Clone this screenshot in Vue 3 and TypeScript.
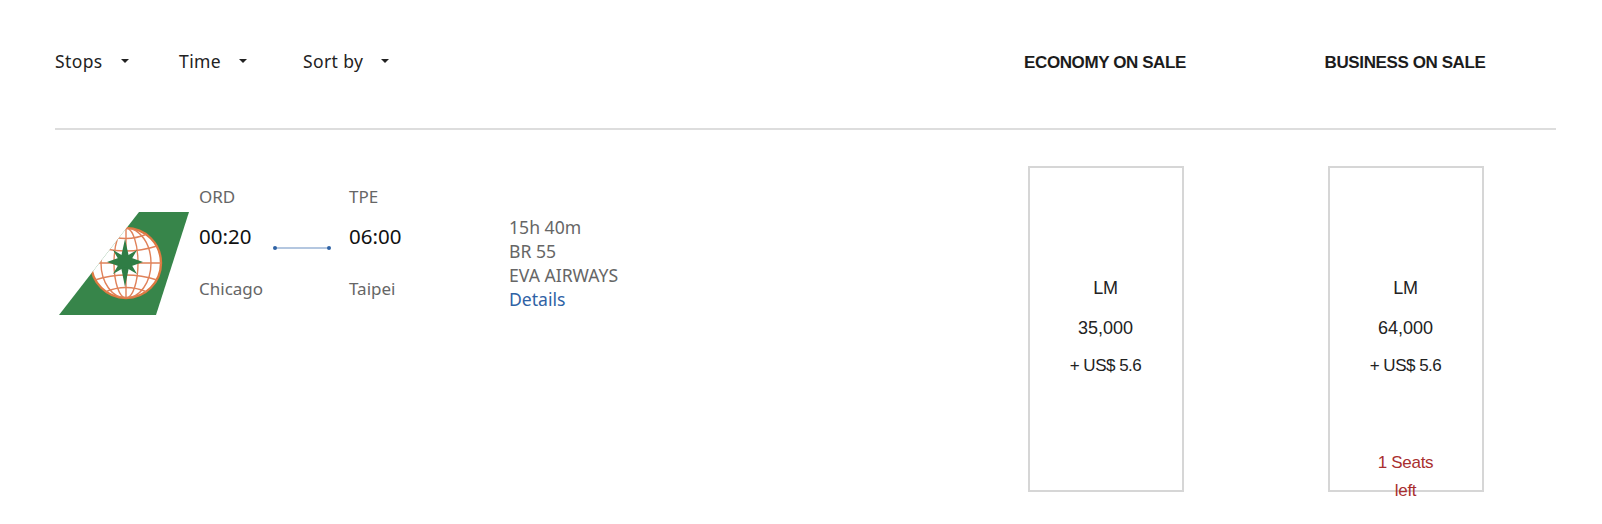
<script setup lang="ts">
interface Fare { label: string; miles: string; tax: string; seats?: string }
const filters: string[] = ['Stops', 'Time', 'Sort by']
const fares: Fare[] = [
  { label: 'LM', miles: '35,000', tax: '+ US$ 5.6' },
  { label: 'LM', miles: '64,000', tax: '+ US$ 5.6', seats: '1 Seats left' },
]
</script>

<template>
  <div class="page">
    <header class="head">
      <div class="filters">
        <div v-for="f in filters" :key="f" class="filter">
          <span>{{ f }}</span><i class="caret"></i>
        </div>
      </div>
      <div class="cabins">
        <div class="cabin"><span>ECONOMY ON SALE</span></div>
        <div class="cabin"><span>BUSINESS ON SALE</span></div>
      </div>
    </header>
    <section class="row">
      <svg class="tail" width="130" height="103" viewBox="0 0 130 103">
        <defs>
          <clipPath id="tailclip"><path d="M80 0H130L97 103H0Z" /></clipPath>
          <clipPath id="globeclip"><circle cx="67" cy="51" r="35" /></clipPath>
        </defs>
        <path d="M80 0H130L97 103H0Z" fill="#37854a" />
        <g clip-path="url(#tailclip)">
          <circle cx="67" cy="51" r="35" fill="#fff" stroke="#de7a42" stroke-width="2.400" />
          <g clip-path="url(#globeclip)" fill="none" stroke="#e0825a" stroke-width="1.400">
            <ellipse cx="67" cy="51" rx="12" ry="35" />
            <ellipse cx="67" cy="51" rx="25" ry="35" />
            <path d="M67 16V86M32 51H102" />
            <path d="M36 34Q67 44 98 34M36 68Q67 58 98 68M46 22Q67 31 88 22M46 80Q67 71 88 80" />
          </g>
        </g>
        <path d="M66 27L70 45L84 50L70 55L66 75L62 55L48 50L62 45Z" fill="#2f7d45" />
        <path d="M54 38L66 45L78 38L71 50L78 62L66 55L54 62L61 50Z" fill="#2f7d45" />
      </svg>
      <div class="route">
        <div class="stop">
          <div class="code">ORD</div>
          <div class="clock">00:20</div>
          <div class="city">Chicago</div>
        </div>
        <div class="link"><i></i></div>
        <div class="stop">
          <div class="code">TPE</div>
          <div class="clock">06:00</div>
          <div class="city">Taipei</div>
        </div>
      </div>
      <div class="info">
        <div>15h 40m</div>
        <div>BR 55</div>
        <div>EVA AIRWAYS</div>
        <a class="details">Details</a>
      </div>
      <div class="fares">
        <div v-for="(fare, i) in fares" :key="i" class="fare">
          <div class="fare-main">
            <div class="fare-label">{{ fare.label }}</div>
            <div class="fare-miles">{{ fare.miles }}</div>
            <div class="fare-tax">{{ fare.tax }}</div>
          </div>
          <div v-if="fare.seats" class="seats">{{ fare.seats }}</div>
        </div>
      </div>
    </section>
  </div>
</template>

<style scoped>
.page {
  box-sizing: border-box;
  width: 1602px;
  height: 524px;
  padding: 0 46px 0 55px;
  background: #fff;
  overflow: hidden;
  font-family: "Noto Sans", sans-serif;
}
.head {
  display: flex;
  justify-content: space-between;
  align-items: center;
  height: 128px;
  border-bottom: 2px solid #ddd;
}
.filters { display: flex; margin-top: -6px; }
.filter {
  display: flex;
  align-items: center;
  width: 124px;
  font-size: 17.500px;
  letter-spacing: 0.400px;
  color: #222;
}
.caret {
  margin-left: 18px;
  border-left: 4px solid transparent;
  border-right: 4px solid transparent;
  border-top: 4px solid #222;
}
.cabins { display: flex; gap: 144px; margin-top: -2px; margin-right: 73px; }
.cabin {
  display: flex;
  justify-content: center;
  white-space: nowrap;
  width: 156px;
  font-family: "Liberation Sans", sans-serif;
  font-size: 17px;
  font-weight: 700;
  letter-spacing: -0.400px;
  color: #1c1c1c;
}
.row {
  display: flex;
  align-items: flex-start;
}
.tail { margin: 82px 0 0 4px; flex: none; }
.route { display: flex; margin: 55px 0 0 10px; }
.stop { width: 74px; }
.code { font-size: 17px; line-height: 24px; color: #666; }
.clock { font-size: 20.500px; line-height: 24px; margin-top: 15px; color: #111; }
.city { font-size: 17px; line-height: 24px; margin-top: 29px; color: #666; }
.link { width: 76px; position: relative; }
.link i {
  position: absolute;
  left: 2px;
  top: 62px;
  width: 54px;
  height: 2px;
  background: #b4c7e0;
}
.link i::before, .link i::after {
  content: "";
  position: absolute;
  top: -1px;
  width: 4px;
  height: 4px;
  border-radius: 50%;
  background: #2f62a5;
}
.link i::before { left: -2px; }
.link i::after { right: -2px; }
.info {
  margin: 85px 0 0 86px;
  font-size: 17.600px;
  line-height: 24px;
  color: #666;
}
.details { color: #2f62a5; display: block; }
.fares {
  display: flex;
  gap: 144px;
  margin: 36px 72px 0 auto;
}
.fare {
  box-sizing: border-box;
  width: 156px;
  height: 326px;
  border: 2px solid #d6d6d6;
  position: relative;
  text-align: center;
  font-family: "Liberation Sans", sans-serif;
  font-size: 17px;
  letter-spacing: -0.300px;
  color: #222;
}
.fare-main { padding: 108px 1px 0 0; }
.fare-label { line-height: 26px; font-size: 18px; margin-top: -1px; }
.fare-miles { line-height: 26px; margin-top: 14px; font-size: 18px; letter-spacing: 0; }
.fare-tax { line-height: 26px; margin-top: 12px; letter-spacing: -0.500px; }
.seats {
  position: absolute;
  left: 0;
  right: 0;
  top: 281px;
  padding: 0 41px 0 40px;
  line-height: 28px;
  color: #a92f2f;
}
</style>

<style>
html, body { margin: 0; background: #fff; }
</style>
